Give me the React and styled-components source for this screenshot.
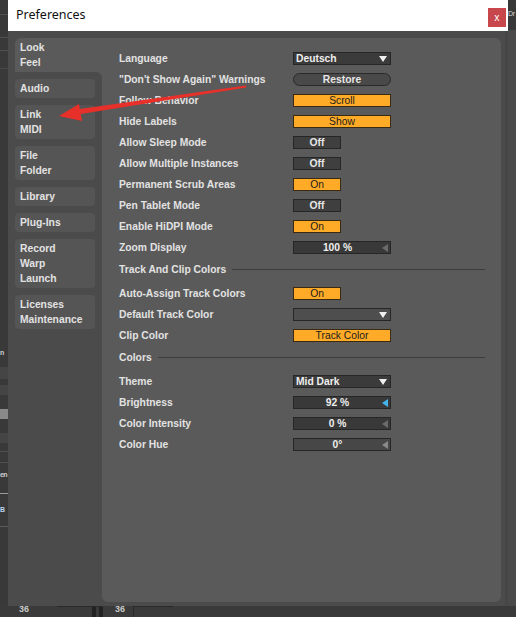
import styled, { createGlobalStyle } from "styled-components";

const GlobalStyle = createGlobalStyle`
  html, body {
    margin: 0;
    padding: 0;
    background: #3c3c3c;
  }
  * {
    box-sizing: border-box;
  }
`;

const UI_FONT = `"Liberation Sans", Arial, sans-serif`;

const Screen = styled.div`
  position: relative;
  width: 516px;
  height: 617px;
  overflow: hidden;
  display: grid;
  grid-template-columns: 8px 500px 8px;
  grid-template-rows: 606px 11px;
  background: #3c3c3c;
`;

const LeftEdge = styled.div`
  display: flex;
  flex-direction: column;
  background: #393939;
  padding-top: 14px;
`;

const EdgeLine = styled.div`
  height: 1px;
  margin-bottom: ${({ $gap }) => $gap}px;
  background: ${({ $color }) => $color || "#505050"};
`;

const EdgeBox = styled.div`
  height: ${({ $h }) => $h}px;
  margin-bottom: ${({ $gap }) => $gap}px;
  background: ${({ $color }) => $color || "#454545"};
`;

const EdgeText = styled.div`
  height: 12px;
  margin-bottom: ${({ $gap }) => $gap}px;
  font: bold 7px ${UI_FONT};
  letter-spacing: -0.6px;
  color: ${({ $color }) => $color || "#cfcfcf"};
  white-space: nowrap;
`;

const RightEdge = styled.div`
  display: flex;
  flex-direction: column;
  background: #4a4a4a;
`;

const RightTop = styled.div`
  height: 30px;
  background: #383838;
  padding-top: 10px;
  font: 7px ${UI_FONT};
  letter-spacing: -0.4px;
  color: #d8d8d8;
  white-space: nowrap;
`;

const BottomStrip = styled.div`
  grid-column: 1 / 4;
  display: flex;
  align-items: flex-start;
  background: #3a3a3a;
  font: bold 9px ${UI_FONT};
  color: #c8c8c8;
`;

const StripText = styled.span`
  width: ${({ $w }) => $w}px;
  padding-left: ${({ $pad }) => $pad || 0}px;
  line-height: 7px;
`;

const StripBox = styled.span`
  width: ${({ $w }) => $w}px;
  height: 11px;
  border-top: 1px solid #2a2a2a;
  border-left: ${({ $edge }) => ($edge ? "1px solid #2a2a2a" : "none")};
  background: ${({ $bg }) => $bg || "transparent"};
`;

const Window = styled.div`
  display: flex;
  flex-direction: column;
  width: 500px;
  height: 606px;
`;

const TitleBar = styled.div`
  height: 31px;
  display: flex;
  justify-content: space-between;
  background: #ffffff;
  padding: 0 2px 0 8px;
`;

const Title = styled.span`
  font: 12.5px "Noto Sans", "Noto Sans CJK SC", sans-serif;
  color: #111;
  line-height: 31px;
  margin-top: -1px;
`;

const CloseButton = styled.div`
  width: 18px;
  height: 19px;
  margin-top: 8px;
  background: #c8474d;
  color: #fff;
  font: 10px "Noto Sans", sans-serif;
  line-height: 18px;
  text-align: center;
`;

const Frame = styled.div`
  flex: 1;
  display: flex;
  background: #4b4b4b;
  padding: 7px 7px 4px 7px;
  box-shadow: inset -3px 0 0 #464646;
`;

const Sidebar = styled.div`
  width: 87px;
  display: flex;
  flex-direction: column;
  background: #5a5a5a;
  border-top-left-radius: 6px;
`;

const TabText = styled.div`
  font: bold 10.3px ${UI_FONT};
  color: #e2e2e2;
  line-height: 15px;
  white-space: pre-line;
`;

const SelectedTab = styled(TabText)`
  height: 34px;
  padding: 2px 5px;
`;

const TabList = styled.div`
  flex: 1;
  display: flex;
  flex-direction: column;
  gap: 7px;
  padding-top: 7px;
  background: #4b4b4b;
  border-top-right-radius: 6px;
`;

const Tab = styled(TabText)`
  width: 80px;
  padding: 2px 5px;
  background: #555555;
  border-radius: 4px;
`;

const Content = styled.div`
  flex: 1;
  display: flex;
  flex-direction: column;
  background: #5a5a5a;
  border-radius: 0 6px 6px 6px;
  padding: 10px 16px 0 17px;
`;

const Row = styled.div`
  display: flex;
  align-items: center;
  height: 21px;
`;

const Label = styled.span`
  width: 174px;
  font: bold 10.3px ${UI_FONT};
  color: #e2e2e2;
  white-space: nowrap;
`;

const Heading = styled.div`
  display: flex;
  align-items: center;
  gap: 6px;
  height: 25px;
  padding-bottom: 2px;
  font: bold 10.3px ${UI_FONT};
  color: #e2e2e2;
  white-space: nowrap;

  &::after {
    content: "";
    flex: 1;
    height: 1px;
    background: #3d3d3d;
  }
`;

const Control = styled.div`
  position: relative;
  width: ${({ $wide }) => ($wide ? 98 : 48)}px;
  height: 13px;
  display: flex;
  align-items: center;
  border: 1px solid #262626;
  font: ${({ $dark }) => ($dark ? "normal" : "bold")} 10.3px ${UI_FONT};
  white-space: nowrap;
`;

const Toggle = styled(Control)`
  justify-content: center;
  background: ${({ $on }) => ($on ? "#ffab28" : "#3f3f3f")};
  color: ${({ $on }) => ($on ? "#1b1b1b" : "#e6e6e6")};
  border-color: ${({ $on }) => ($on ? "#3a2a10" : "#262626")};
`;

const Pill = styled(Control)`
  justify-content: center;
  background: #494949;
  color: #e6e6e6;
  border-color: #2a2a2a;
  border-radius: 7px;
`;

const Select = styled(Control)`
  padding-left: 2px;
  background: ${({ $bg }) => $bg || "#3b3b3b"};
  color: #eeeeee;

  &::after {
    content: "";
    position: absolute;
    right: 3px;
    top: 3px;
    border-left: 4px solid transparent;
    border-right: 4px solid transparent;
    border-top: 6px solid #f0f0f0;
  }
`;

const NumberBox = styled(Control)`
  justify-content: center;
  padding-right: 9px;
  background: ${({ $bg }) => $bg || "#393939"};
  color: #eeeeee;

  &::after {
    content: "";
    position: absolute;
    right: 2px;
    top: 2px;
    border-top: 4px solid transparent;
    border-bottom: 4px solid transparent;
    border-right: 6px solid ${({ $accent }) => $accent || "#6b6b6b"};
  }
`;

const Overlay = styled.svg`
  position: absolute;
  left: 0;
  top: 0;
  pointer-events: none;
`;

const generalRows = [
  { label: "Language", kind: "select", value: "Deutsch" },
  { label: "\"Don't Show Again\" Warnings", kind: "pill", value: "Restore" },
  { label: "Follow Behavior", kind: "toggle", value: "Scroll", on: true, wide: true },
  { label: "Hide Labels", kind: "toggle", value: "Show", on: true, wide: true },
  { label: "Allow Sleep Mode", kind: "toggle", value: "Off" },
  { label: "Allow Multiple Instances", kind: "toggle", value: "Off" },
  { label: "Permanent Scrub Areas", kind: "toggle", value: "On", on: true },
  { label: "Pen Tablet Mode", kind: "toggle", value: "Off" },
  { label: "Enable HiDPI Mode", kind: "toggle", value: "On", on: true },
  { label: "Zoom Display", kind: "number", value: "100 %" },
];

const trackRows = [
  { label: "Auto-Assign Track Colors", kind: "toggle", value: "On", on: true },
  { label: "Default Track Color", kind: "select", value: "", bg: "#4e4e4e" },
  { label: "Clip Color", kind: "toggle", value: "Track Color", on: true, wide: true },
];

const colorRows = [
  { label: "Theme", kind: "select", value: "Mid Dark" },
  { label: "Brightness", kind: "number", value: "92 %", accent: "#45b4ea" },
  { label: "Color Intensity", kind: "number", value: "0 %" },
  { label: "Color Hue", kind: "number", value: "0°", bg: "#474747", accent: "#8a8a8a" },
];

const tabs = ["Audio", "Link\nMIDI", "File\nFolder", "Library", "Plug-Ins", "Record\nWarp\nLaunch", "Licenses\nMaintenance"];

function Setting({ row }) {
  let control;
  if (row.kind === "select") {
    control = <Select $wide $bg={row.bg}>{row.value}</Select>;
  } else if (row.kind === "pill") {
    control = <Pill $wide>{row.value}</Pill>;
  } else if (row.kind === "number") {
    control = (
      <NumberBox $wide $bg={row.bg} $accent={row.accent}>
        {row.value}
      </NumberBox>
    );
  } else {
    control = (
      <Toggle $on={row.on} $dark={row.on} $wide={row.wide}>
        {row.value}
      </Toggle>
    );
  }
  return (
    <Row>
      <Label>{row.label}</Label>
      {control}
    </Row>
  );
}

export default function App() {
  return (
    <>
      <GlobalStyle />
      <Screen>
        <LeftEdge>
          <EdgeLine $gap={22} />
          <EdgeLine $gap={12} />
          <EdgeLine $gap={17} />
          <EdgeLine $gap={280} $color="#474747" />
          <EdgeText $gap={6}>n</EdgeText>
          <EdgeBox $h={12} $gap={6} />
          <EdgeBox $h={10} $gap={14} />
          <EdgeBox $h={10} $gap={14} $color="#8a8a8a" />
          <EdgeBox $h={10} $gap={8} />
          <EdgeLine $gap={10} />
          <EdgeLine $gap={8} />
          <EdgeText $gap={10}>en</EdgeText>
          <EdgeLine $gap={12} $color="#9a9a9a" />
          <EdgeText $gap={8} $color="#bcd2ee">B</EdgeText>
          <EdgeLine $gap={0} $color="#5a5a5a" />
        </LeftEdge>
        <Window>
          <TitleBar>
            <Title>Preferences</Title>
            <CloseButton>x</CloseButton>
          </TitleBar>
          <Frame>
            <Sidebar>
              <SelectedTab>{"Look\nFeel"}</SelectedTab>
              <TabList>
                {tabs.map((t) => (
                  <Tab key={t}>{t}</Tab>
                ))}
              </TabList>
            </Sidebar>
            <Content>
              {generalRows.map((r) => (
                <Setting key={r.label} row={r} />
              ))}
              <Heading>Track And Clip Colors</Heading>
              {trackRows.map((r) => (
                <Setting key={r.label} row={r} />
              ))}
              <Heading>Colors</Heading>
              {colorRows.map((r) => (
                <Setting key={r.label} row={r} />
              ))}
            </Content>
          </Frame>
        </Window>
        <RightEdge>
          <RightTop>Dr</RightTop>
        </RightEdge>
        <BottomStrip>
          <StripText $w={57} $pad={19}>36</StripText>
          <StripBox $w={22} />
          <StripBox $w={13} />
          <StripBox $w={4} $bg="#222" />
          <StripBox $w={3} />
          <StripBox $w={4} $bg="#222" />
          <StripText $w={30} $pad={12}>36</StripText>
          <StripBox $w={40} $edge />
        </BottomStrip>
        <Overlay width="516" height="617" viewBox="0 0 516 617">
          <polygon
            points="246,85.5 246.3,87.5 80.6,114 79.6,109"
            fill="#e8302a"
          />
          <polygon points="59,116 79,104 82,121" fill="#e8302a" />
        </Overlay>
      </Screen>
    </>
  );
}
